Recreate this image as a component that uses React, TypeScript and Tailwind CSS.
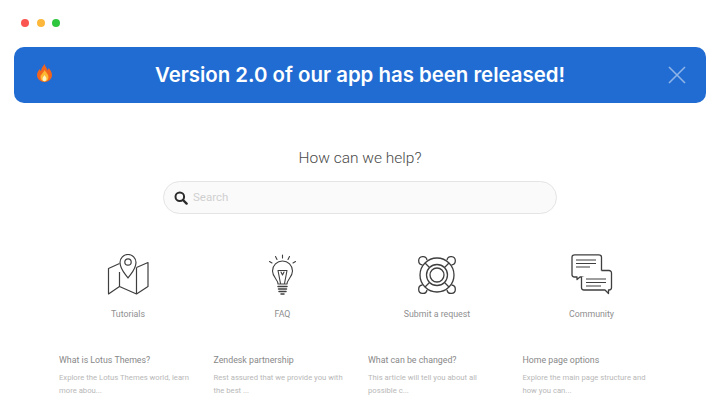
import React from 'react';

const MapIcon = () => (
  <svg width="42" height="42" viewBox="0 0 42 42" fill="none" stroke="#3f3f3f" strokeWidth="1.2" strokeLinejoin="round">
    <path d="M12.5 9.5 L1.5 14.5 V40 L12.5 32.5 L29.5 40 L41 32.5 V8.5 L29.5 13.5" />
    <path d="M12.5 18 V32.5 M29.5 13.5 V40" />
    <path d="M21 24 C17.5 19 13 15 13 8.5 A8 8 0 0 1 29 8.5 C29 15 24.5 19 21 24 Z" fill="#fff" />
    <circle cx="21" cy="8" r="3.2" />
  </svg>
);

const BulbIcon = () => (
  <svg width="32" height="42" viewBox="0 0 32 42" fill="none" stroke="#3f3f3f" strokeWidth="1.1" strokeLinecap="round" strokeLinejoin="round">
    <path d="M15.5 1 V4 M8.5 2.5 L10 5.5 M22.5 2.5 L21 5.5 M2.5 7.5 L5 9 M28.5 7.5 L26 9" />
    <path d="M11 30 C11 25.5 5.5 23 5.5 17 A10 10 0 0 1 25.5 17 C25.5 23 20 25.5 20 30 Z" />
    <path d="M11 16.5 H20 M11 16.5 L13.5 29.5 M20 16.5 L17.5 29.5 M14 18 L15.5 21 L17 18" />
    <path d="M11 32.5 H20 M11.5 35 H19.5 M12 37.5 H19 M14 40 H17" strokeWidth="1.5" />
  </svg>
);

const LifebuoyIcon = () => (
  <svg width="42" height="42" viewBox="0 0 42 42" fill="none" stroke="#3f3f3f" strokeWidth="1.3">
    <circle cx="21" cy="21" r="17" />
    <circle cx="21" cy="21" r="10.5" />
    <circle cx="21" cy="21" r="7" />
    <path d="M6.5 11 A4.2 4.2 0 1 1 11 6 M35.5 11 A4.2 4.2 0 1 0 31 6 M6.5 31 A4.2 4.2 0 1 0 11 36 M35.5 31 A4.2 4.2 0 1 1 31 36" />
    <path d="M9 9 L13.5 13.5 M33 9 L28.5 13.5 M9 33 L13.5 28.5 M33 33 L28.5 28.5" />
  </svg>
);

const ChatIcon = () => (
  <svg width="42" height="42" viewBox="0 0 42 42" fill="none" stroke="#3f3f3f" strokeWidth="1.3" strokeLinejoin="round">
    <path d="M3.5 0.8 H28 A2.5 2.5 0 0 1 30.5 3.3 V20.5 A2.5 2.5 0 0 1 28 23 H9 L6 25.5 V23 H3.5 A2.5 2.5 0 0 1 1 20.5 V3.3 A2.5 2.5 0 0 1 3.5 0.8 Z" />
    <path d="M30.5 16.5 H38 A2.5 2.5 0 0 1 40.5 19 V33.5 A2.5 2.5 0 0 1 38 36 H37.5 V39.5 L34 36 H13 A2.5 2.5 0 0 1 10.5 33.5 V23" fill="#fff" />
    <path d="M5 6 H25 M5 9.5 H25 M5 13 H19 M15 25 H35 M15 28.5 H35 M15 32 H30" strokeWidth="1.2" />
  </svg>
);

const Flame = () => (
  <svg width="15" height="18" viewBox="0 0 15 18">
    <path d="M7.5 0 C8.5 3 10 4 10.5 6.5 C11 5.5 11.5 5 11.5 4 C13.5 6 15 8.5 15 11 C15 15 11.5 18 7.5 18 C3.5 18 0 15 0 11 C0 8.5 1.5 7 2.5 5 C3 6 3.2 6.5 4 7 C4.2 4 6 2.5 7.5 0 Z" fill="#f0641e" />
    <path d="M7.5 6 C8.5 8 11.5 10 11.5 13 C11.5 15.8 9.7 17.5 7.5 17.5 C5.3 17.5 3.5 15.8 3.5 13 C3.5 10.5 6.5 9 7.5 6 Z" fill="#fdb833" />
    <path d="M7.5 11 C8.3 12.3 9.5 13.2 9.5 14.7 C9.5 16.2 8.6 17.2 7.5 17.2 C6.4 17.2 5.5 16.2 5.5 14.7 C5.5 13.2 6.9 12.3 7.5 11 Z" fill="#fff3c4" />
  </svg>
);

const topics = [
  { label: 'Tutorials', icon: <MapIcon /> },
  { label: 'FAQ', icon: <BulbIcon /> },
  { label: 'Submit a request', icon: <LifebuoyIcon /> },
  { label: 'Community', icon: <ChatIcon /> },
];

const articles = [
  { title: 'What is Lotus Themes?', text: 'Explore the Lotus Themes world, learn more abou...' },
  { title: 'Zendesk partnership', text: 'Rest assured that we provide you with the best ...' },
  { title: 'What can be changed?', text: 'This article will tell you about all possible c...' },
  { title: 'Home page options', text: 'Explore the main page structure and how you can...' },
];

export default function App() {
  return (
    <div className="w-[720px] h-[400px] overflow-hidden bg-white font-['Roboto',sans-serif]">
      <div className="flex gap-[7.5px] pl-[21px] pt-[18.5px]">
        <span className="w-2 h-2 rounded-full bg-[#fb5552]"></span>
        <span className="w-2 h-2 rounded-full bg-[#fdb73b]"></span>
        <span className="w-2 h-2 rounded-full bg-[#2fc63f]"></span>
      </div>

      <div className="relative mx-[14px] mt-[20.5px] h-[56px] rounded-[10px] bg-[#216cd2] flex items-center justify-center">
        <span className="absolute left-[23px] top-[17px]"><Flame /></span>
        <h2 className="font-['Inter',sans-serif] font-semibold text-[20.4px] text-white">Version 2.0 of our app has been released!</h2>
        <svg className="absolute right-[20px] top-[19px]" width="18" height="18" viewBox="0 0 18 18" stroke="#8fb5e8" strokeWidth="1.6">
          <path d="M1 1 L17 17 M17 1 L1 17" />
        </svg>
      </div>

      <h1 className="mt-[44px] text-center text-[15.5px] leading-[23px] font-light text-[#4a4a4a]">How can we help?</h1>

      <div className="mx-auto mt-[11px] w-[394px] h-[33px] rounded-full border border-[#e4e4e4] bg-[#fafafa] flex items-center pl-[10px] gap-[5px]">
        <svg width="14" height="14" viewBox="0 0 14 14" fill="none" stroke="#2b2b2b" strokeWidth="2" strokeLinecap="round">
          <circle cx="5.8" cy="5.8" r="4.3" />
          <path d="M9 9 L12.6 12.6" strokeWidth="2.4" />
        </svg>
        <span className="text-[11.5px] text-[#d0d0d0]">Search</span>
      </div>

      <div className="mt-[40px] pl-[59px] grid grid-cols-[repeat(4,154.5px)]">
        {topics.map((t) => (
          <div key={t.label} className="w-[138px] flex flex-col items-center">
            <div className="h-[42px] flex items-center">{t.icon}</div>
            <span className="mt-[12px] text-[8.8px] leading-[12px] text-[#8f8f8f]">{t.label}</span>
          </div>
        ))}
      </div>

      <div className="mt-[34px] pl-[59px] grid grid-cols-[repeat(4,154.5px)]">
        {articles.map((a) => (
          <div key={a.title} className="w-[136px]">
            <h3 className="text-[8.8px] leading-[12px] font-normal text-[#888888]">{a.title}</h3>
            <p className="mt-[4.5px] text-[7.7px] leading-[13px] text-[#b8b8b8]">{a.text}</p>
          </div>
        ))}
      </div>
    </div>
  );
}
